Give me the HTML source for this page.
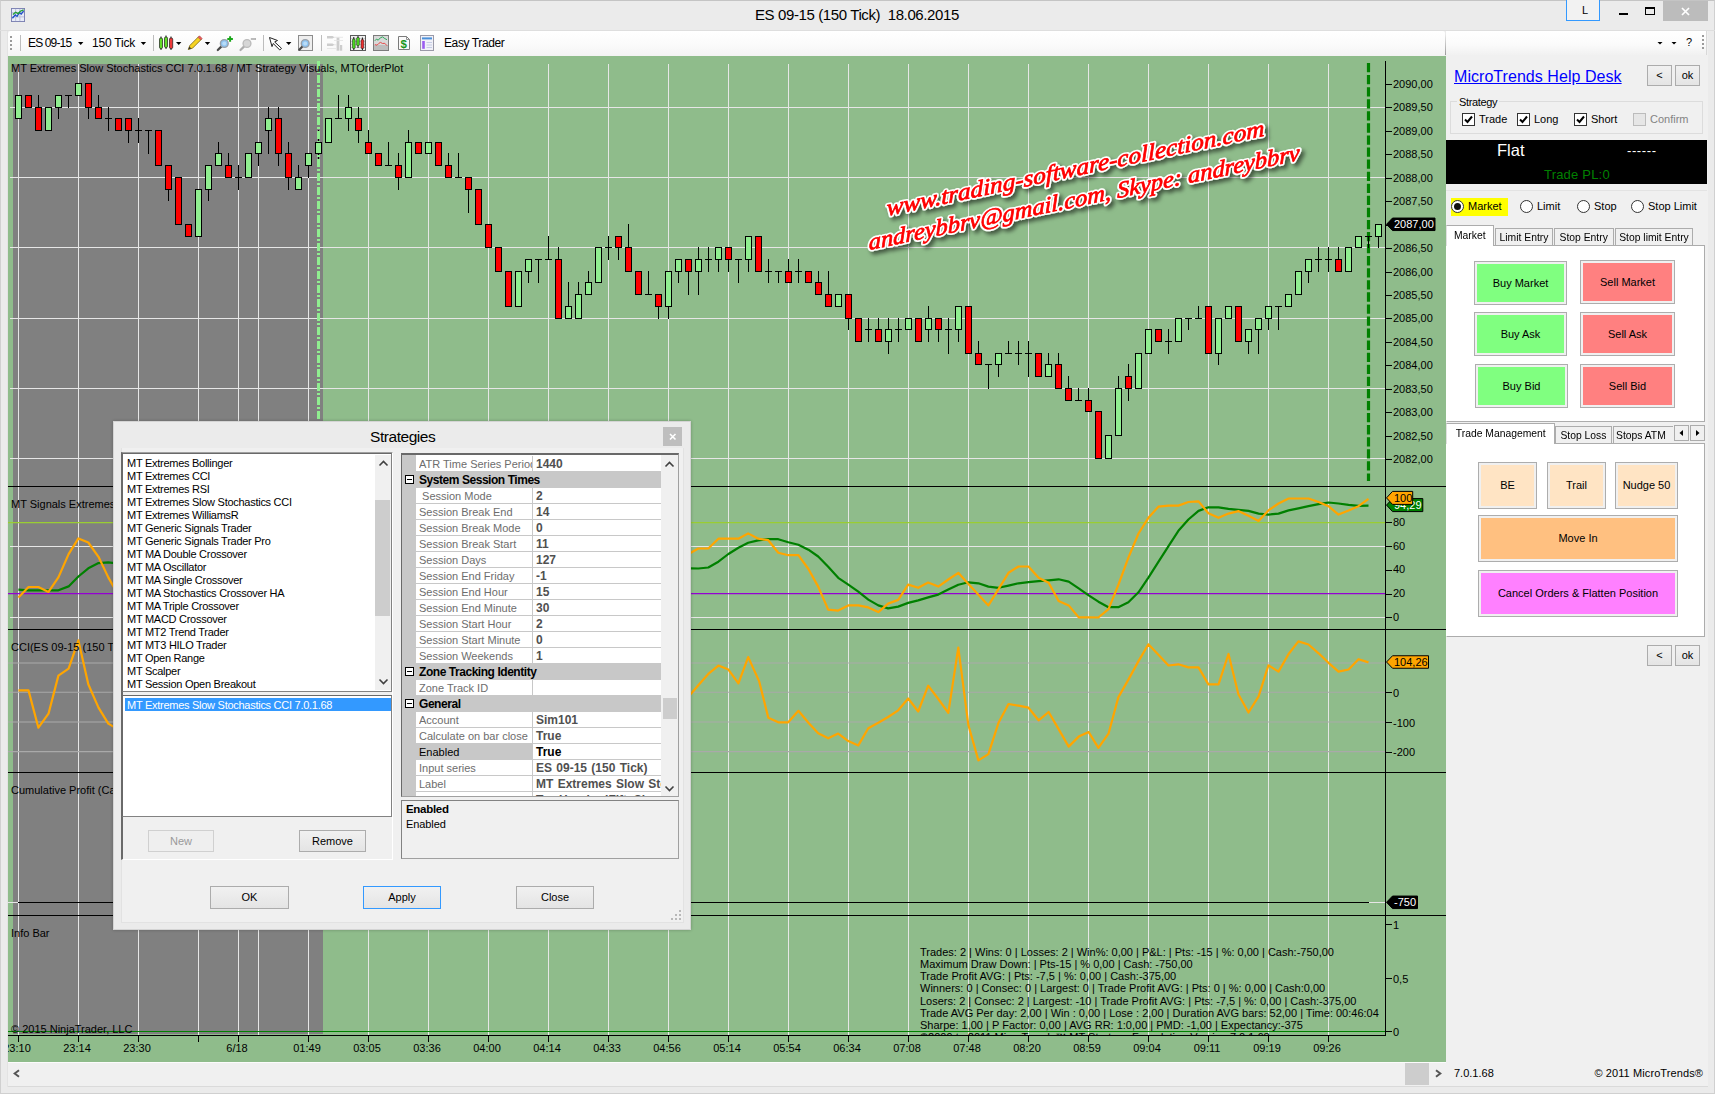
<!DOCTYPE html>
<html lang="en"><head><meta charset="utf-8"><title>ES 09-15 (150 Tick) 18.06.2015</title>
<style>
*{box-sizing:border-box;margin:0;padding:0}
html,body{width:1715px;height:1094px;overflow:hidden}
body{position:relative;background:#EBEBEB;font-family:"Liberation Sans",sans-serif;font-size:11px;color:#000}
.abs{position:absolute}
.t{position:absolute;white-space:nowrap;line-height:1}
.btn{position:absolute;background:linear-gradient(#F1F1F1,#E4E4E4);border:1px solid #ACACAC;text-align:center;white-space:nowrap}
.cbtn{position:absolute;background:#F0F0F0;border:1px solid #ADADAD;padding:2px}
.cbtn>div{width:100%;height:100%;display:flex;align-items:center;justify-content:center;white-space:nowrap;font-size:12px;padding-bottom:1px}
.nx{display:inline-block;font-size:11px}
.nc{display:inline-block;font-size:11px}
.nt{display:inline-block;font-size:11px;transform:scaleX(.94);transform-origin:50% 50%}
.ntl{display:inline-block;font-size:11px;transform:scaleX(.94);transform-origin:0 50%}
.chk{position:absolute;width:13px;height:13px;border:1px solid #333;background:#fff}
.chk svg{position:absolute;left:0;top:0}
.radio{position:absolute;width:13px;height:13px;border:1px solid #333;border-radius:50%;background:#fff}
.tab{position:absolute;border:1px solid #ACACAC;border-bottom:none;background:#F0F0F0;font-size:12px;white-space:nowrap;text-align:center}
.tab.sel{background:#fff;z-index:2}
.page{position:absolute;background:#fff;border:1px solid #ACACAC}
.row{position:absolute;left:0;height:16px;width:245px;border-bottom:1px solid #C8C8C8;color:#6D6D6D;white-space:nowrap;overflow:hidden}
.row .n{position:absolute;left:3px;top:2px;width:113px;overflow:hidden}
.row .v{position:absolute;left:120px;top:1px;font-weight:bold;color:#505050;font-size:12px;word-spacing:1px}
.row .s{position:absolute;left:116px;top:0;width:1px;height:16px;background:#C8C8C8}
.cat{position:absolute;left:-13px;height:16px;width:258px;background:#C8C8C8;font-weight:bold;color:#000;white-space:nowrap}
.cat span{position:absolute;left:16px;top:1px;font-size:12px;letter-spacing:-0.45px}
.cat i{position:absolute;left:2px;top:3px;width:9px;height:9px;border:1px solid #000;background:#fff}
.cat i:after{content:"";position:absolute;left:1px;top:3px;width:5px;height:1px;background:#000}
.li{position:absolute;left:6px;white-space:nowrap;letter-spacing:-0.27px}
</style></head><body>

<div class="abs" style="left:0;top:0;width:1715px;height:1094px;border:1px solid #D0D0D0;border-top-color:#C4C4C4"></div>
<svg class="abs" style="left:11px;top:8px" width="14" height="14" viewBox="0 0 15 15"><rect x=".5" y=".5" width="14" height="14" fill="#E8ECF8" stroke="#7A7FB0"/><path d="M1 5H14M1 9.5H14M5 1V14M9.5 1V14" stroke="#B8BCD8" stroke-width="1"/><path d="M1.5 11L4.5 7.5L6.5 9L9 5L11 6.5L13.5 3" fill="none" stroke="#2050C8" stroke-width="1.4"/><path d="M2 7L5 4.5L7.5 6L10 3.5L13.5 2" fill="none" stroke="#20A030" stroke-width="1.4"/></svg>
<div class="t" id="title" style="left:755px;top:7px;font-size:15px;letter-spacing:-0.39px;color:#000">ES 09-15 (150 Tick)&nbsp; 18.06.2015</div>
<div class="abs" style="left:1566px;top:0;width:34px;height:21px;border:1px solid #3399FF;border-top:none;background:#F2F2F2"></div>
<div class="t" style="left:1582px;top:5px;font-size:11px">L</div>
<div class="abs" style="left:1619px;top:13px;width:9px;height:2px;background:#000"></div>
<div class="abs" style="left:1645px;top:7px;width:10px;height:8px;border:1px solid #000;border-top-width:2px"></div>
<div class="abs" style="left:1663px;top:1px;width:45px;height:20px;background:#BCBCBC"></div>
<svg class="abs" style="left:1681px;top:7px" width="10" height="10"><path d="M1 1L8 8M8 1L1 8" stroke="#fff" stroke-width="1.7"/></svg>


<div class="abs" style="left:8px;top:31px;width:1437px;height:25px;background:linear-gradient(#FFFFFF,#FAFAFA 60%,#F3F3F3);border-top-left-radius:3px;border-top-right-radius:2px;border-bottom-right-radius:2px"></div>
<div class="abs" style="left:1445px;top:34px;width:1px;height:21px;background:linear-gradient(rgba(160,160,160,0),#9A9A9A)"></div>
<div class="abs" style="left:0;top:30px;width:1715px;height:1px;background:#DEDEDE"></div>
<svg class="abs" style="left:8px;top:31px" width="520" height="25" viewBox="8 31 520 25">
<g fill="#9A9A9A"><rect x="10" y="36" width="2" height="2"/><rect x="10" y="40" width="2" height="2"/><rect x="10" y="44" width="2" height="2"/><rect x="10" y="48" width="2" height="2"/></g>
<g stroke="#BDBDBD" stroke-width="1"><path d="M20.5 35V51M153.5 35V51M263.5 35V51M321.5 35V51"/></g>
<g fill="#000"><path d="M78 42h5.400l-2.700 3z"/><path d="M140.700 42h5.400l-2.700 3z"/><path d="M176 42h5.400l-2.700 3z"/><path d="M204.800 42h5.400l-2.700 3z"/><path d="M286 42h5.400l-2.700 3z"/></g>
<!-- candles icon -->
<g stroke="#1a1a1a" stroke-width="1"><path d="M161 36.500V50M166 35.500V49M171 36.500V50"/><rect x="159.500" y="38" width="3" height="10.500" rx="1.200" fill="#62DC2A" stroke-width=".7"/><rect x="164.500" y="37" width="3" height="10.500" rx="1.200" fill="#62DC2A" stroke-width=".7"/><rect x="169.500" y="38" width="3.200" height="10.500" rx="1.200" fill="#EE3A3A" stroke-width=".7"/></g>
<!-- pencil -->
<g><path d="M188.300 49.500l1.500-4l8.800-8.800l2.700 2.700l-8.800 8.800z" fill="#F6D422" stroke="#7A6410" stroke-width=".8"/><path d="M188.300 49.500l1.100-3l1.900 1.900z" fill="#333"/><path d="M198 37.300l1.500-1.500l2.700 2.700l-1.500 1.500z" fill="#E85C5C" stroke="#A04040" stroke-width=".5"/></g>
<!-- zoom in -->
<g><path d="M217.800 50l3.700-3.600" stroke="#4A4A4A" stroke-width="2.200" stroke-linecap="round"/><circle cx="224.300" cy="43.500" r="3.900" fill="#8EC4F2" stroke="#9AA0A8" stroke-width="1.400"/><circle cx="224.300" cy="43.500" r="2" fill="#B8DCF8"/><path d="M227.300 39h5.600M230.100 36.200v5.600" stroke="#18A818" stroke-width="2"/></g>
<!-- zoom out (grey) -->
<g><path d="M240.500 50l3.700-3.600" stroke="#ACACAC" stroke-width="2.200" stroke-linecap="round"/><circle cx="247" cy="43.500" r="3.900" fill="#D6D6D6" stroke="#BCBCBC" stroke-width="1.400"/><path d="M250.800 39h5.200" stroke="#B4B4B4" stroke-width="1.800"/></g>
<!-- cursor -->
<path d="M269.500 37.500L277.500 40.500L274.700 42L281.500 48.300L279.800 50L273.200 43.500L272 46.600Z" fill="#fff" stroke="#222" stroke-width="1"/>
<!-- zoom box -->
<g><rect x="298.500" y="35.500" width="14" height="15" fill="#EEEEEE" stroke="#8C8C8C"/><circle cx="305.200" cy="43.500" r="3.900" fill="#8EC4F2" stroke="#9AA0A8" stroke-width="1.400"/><circle cx="305.200" cy="43.500" r="2" fill="#B8DCF8"/><path d="M298.800 50.200l3.600-3.700" stroke="#4A4A4A" stroke-width="2.200"/></g>
<!-- grey icon -->
<g fill="#CDCDCD"><path d="M327 36h5.500l2 1.300l-2 1.300h-5.500z"/><path d="M327 43.500h5.500l2 1.300l-2 1.300h-5.500z"/><rect x="336.600" y="37.500" width="2.800" height="13.200"/><rect x="340" y="45" width="2.200" height="5.700"/><path d="M334 37.300h9M334 40.500h9M334 44.800h3M327 48.500h9" stroke="#E2E2E2" stroke-width=".8" fill="none"/></g>
<!-- candle chart icon -->
<g><rect x="350.500" y="35.500" width="15" height="15" fill="#F0F0F0" stroke="#5A5A5A"/><path d="M351 38.500h14M351 41.500h14M351 44.500h14M351 47.500h14" stroke="#C4C4C4" stroke-width=".8"/><path d="M353.800 37V50M358 36V48M362.400 37.500V50" stroke="#111"/><rect x="352.400" y="39" width="2.800" height="9.500" rx="1" fill="#4CD820" stroke="#111" stroke-width=".5"/><rect x="356.600" y="37.500" width="2.800" height="8.200" rx="1" fill="#4CD820" stroke="#111" stroke-width=".5"/><rect x="361" y="39.600" width="2.800" height="9" rx="1" fill="#EE3030" stroke="#111" stroke-width=".5"/></g>
<!-- line chart icon -->
<g><rect x="373.500" y="35.500" width="15" height="15" fill="#D9D9D9" stroke="#7C7C7C"/><rect x="374" y="45" width="14" height="5" fill="#BDBDBD"/><path d="M374.800 40.800l1.700-1.700l1.700 1.100l2.200-2.400l2.200-.900l2.200 1.700l2.200 1.100" fill="none" stroke="#2CA85A" stroke-width="1"/><path d="M374.800 44.600l2.200.600l1.700-1.700l1.700-1.100l2.200 1.100l2.200-.200l2.200 2.400" fill="none" stroke="#E84848" stroke-width="1"/></g>
<!-- dollar icon -->
<g><path d="M398.500 36.500h8l3 3v10h-11z" fill="#FAFAFA" stroke="#7A7A7A"/><path d="M406.500 36.500v3h3" fill="none" stroke="#7A7A7A" stroke-width=".8"/><text x="400.400" y="47.800" font-size="11.500" font-weight="bold" fill="#18961E" font-family="'Liberation Sans',sans-serif">$</text></g>
<!-- table icon -->
<g><rect x="420.500" y="35.500" width="13" height="15" fill="#F1F1F8" stroke="#9A9AA8"/><rect x="422" y="37.400" width="10" height="2" fill="#4A90DA"/><rect x="422.200" y="41" width="2.600" height="7.800" fill="#9A5CF0"/><path d="M426.500 42.500h5.500M426.500 45h5.500M426.500 47.500h5.500" stroke="#C4CCE4" stroke-width="1"/></g>
</svg>
<div class="t" style="left:28px;top:37px;font-size:12px;letter-spacing:-0.85px">ES 09-15</div>
<div class="t" style="left:92px;top:37px;font-size:12px;letter-spacing:-0.2px">150 Tick</div>
<div class="t" style="left:444px;top:37px;font-size:12px;letter-spacing:-0.4px">Easy Trader</div>

<svg id="chart" width="1438" height="1006" viewBox="8 56 1438 1006" style="position:absolute;left:8px;top:56px;font-family:'Liberation Sans',sans-serif;font-size:11px">
<rect x="8" y="56" width="1438" height="1006" fill="#8FBC8B"/>
<rect x="13" y="64" width="310" height="970" fill="#808080"/>
<g stroke="#E6E6E6" stroke-width="1" fill="none" shape-rendering="crispEdges">
<path d="M18.5 64V1035"/>
<path d="M78.5 64V1035"/>
<path d="M138.5 64V1035"/>
<path d="M198.5 64V1035"/>
<path d="M238.5 64V1035"/>
<path d="M258.5 64V1035"/>
<path d="M308.5 64V1035"/>
<path d="M368.5 64V1035"/>
<path d="M428.5 64V1035"/>
<path d="M488.5 64V1035"/>
<path d="M548.5 64V1035"/>
<path d="M608.5 64V1035"/>
<path d="M668.5 64V1035"/>
<path d="M728.5 64V1035"/>
<path d="M788.5 64V1035"/>
<path d="M848.5 64V1035"/>
<path d="M908.5 64V1035"/>
<path d="M968.5 64V1035"/>
<path d="M1028.5 64V1035"/>
<path d="M1088.5 64V1035"/>
<path d="M1148.5 64V1035"/>
<path d="M1208.5 64V1035"/>
<path d="M1268.5 64V1035"/>
<path d="M1328.5 64V1035"/>
<path d="M10 107.5H1385"/>
<path d="M10 177.5H1385"/>
<path d="M10 247.5H1385"/>
<path d="M10 318.5H1385"/>
<path d="M10 388.5H1385"/>
<path d="M10 458.5H1385"/>
<path d="M10 546.5H1385"/>
<path d="M10 617.5H1385"/>
<path d="M8 902.5H1386"/>
</g>
<path d="M8 522.6H1386" stroke="#9ACD32" stroke-width="1.2"/>
<path d="M8 593.6H1386" stroke="#9400D3" stroke-width="1.2"/>
<path d="M8 663H1386" stroke="#A9A9A9" stroke-width="1.1"/>
<path d="M8 692.3H1386" stroke="#A9A9A9" stroke-width="1.1"/>
<path d="M8 722H1386" stroke="#A9A9A9" stroke-width="1.1"/>
<path d="M8 751.6H1386" stroke="#A9A9A9" stroke-width="1.1"/>
<path d="M1368.5 63V481" stroke="#008000" stroke-width="3.2" stroke-dasharray="9.3 2.77" fill="none"/>
<g shape-rendering="crispEdges" stroke="#000" stroke-width="1">
<path d="M18.5 95V119"/>
<rect x="15.5" y="95.5" width="6" height="23.0" fill="#90EE90"/>
<path d="M28.5 95V108"/>
<rect x="25.5" y="95.5" width="6" height="12.0" fill="#FF0000"/>
<path d="M38.5 95V131"/>
<rect x="35.5" y="107.5" width="6" height="23.0" fill="#FF0000"/>
<path d="M48.5 107V131"/>
<rect x="45.5" y="107.5" width="6" height="23.0" fill="#90EE90"/>
<path d="M58.5 95V119"/>
<rect x="55.5" y="95.5" width="6" height="12.0" fill="#90EE90"/>
<path d="M68.5 95V108"/>
<path d="M65.0 95.5H72.0"/>
<path d="M78.5 83V96"/>
<rect x="75.5" y="83.5" width="6" height="12.0" fill="#90EE90"/>
<path d="M88.5 83V119"/>
<rect x="85.5" y="83.5" width="6" height="24.0" fill="#FF0000"/>
<path d="M98.5 95V119"/>
<rect x="95.5" y="107.5" width="6" height="11.0" fill="#FF0000"/>
<path d="M108.5 107V131"/>
<path d="M105.0 118.5H112.0"/>
<path d="M118.5 118V131"/>
<rect x="115.5" y="118.5" width="6" height="12.0" fill="#FF0000"/>
<path d="M128.5 118V143"/>
<rect x="125.5" y="118.5" width="6" height="12.0" fill="#FF0000"/>
<path d="M138.5 118V143"/>
<path d="M135.0 130.5H142.0"/>
<path d="M148.5 130V154"/>
<path d="M145.0 130.5H152.0"/>
<path d="M158.5 130V166"/>
<rect x="155.5" y="130.5" width="6" height="35.0" fill="#FF0000"/>
<path d="M168.5 165V201"/>
<rect x="165.5" y="165.5" width="6" height="24.0" fill="#FF0000"/>
<path d="M178.5 177V225"/>
<rect x="175.5" y="177.5" width="6" height="47.0" fill="#FF0000"/>
<path d="M188.5 224V237"/>
<rect x="185.5" y="224.5" width="6" height="12.0" fill="#FF0000"/>
<path d="M198.5 189V237"/>
<rect x="195.5" y="189.5" width="6" height="47.0" fill="#90EE90"/>
<path d="M208.5 165V201"/>
<rect x="205.5" y="165.5" width="6" height="24.0" fill="#90EE90"/>
<path d="M218.5 142V166"/>
<rect x="215.5" y="153.5" width="6" height="12.0" fill="#90EE90"/>
<path d="M228.5 153V178"/>
<rect x="225.5" y="165.5" width="6" height="12.0" fill="#FF0000"/>
<path d="M238.5 165V190"/>
<path d="M235.0 177.5H242.0"/>
<path d="M248.5 153V178"/>
<rect x="245.5" y="153.5" width="6" height="24.0" fill="#90EE90"/>
<path d="M258.5 142V166"/>
<rect x="255.5" y="142.5" width="6" height="11.0" fill="#90EE90"/>
<path d="M268.5 107V154"/>
<rect x="265.5" y="118.5" width="6" height="12.0" fill="#90EE90"/>
<path d="M278.5 107V166"/>
<rect x="275.5" y="118.5" width="6" height="35.0" fill="#FF0000"/>
<path d="M288.5 142V190"/>
<rect x="285.5" y="153.5" width="6" height="24.0" fill="#FF0000"/>
<path d="M298.5 165V190"/>
<rect x="295.5" y="177.5" width="6" height="12.0" fill="#90EE90"/>
<path d="M308.5 153V178"/>
<rect x="305.5" y="153.5" width="6" height="12.0" fill="#90EE90"/>
<path d="M318.5 130V166"/>
<rect x="315.5" y="142.5" width="6" height="11.0" fill="#90EE90"/>
<path d="M328.5 118V143"/>
<rect x="325.5" y="118.5" width="6" height="24.0" fill="#90EE90"/>
<path d="M338.5 95V119"/>
<path d="M335.0 118.5H342.0"/>
<path d="M348.5 95V131"/>
<rect x="345.5" y="107.5" width="6" height="11.0" fill="#90EE90"/>
<path d="M358.5 107V143"/>
<rect x="355.5" y="118.5" width="6" height="12.0" fill="#FF0000"/>
<path d="M368.5 130V154"/>
<rect x="365.5" y="142.5" width="6" height="11.0" fill="#FF0000"/>
<path d="M378.5 153V166"/>
<rect x="375.5" y="153.5" width="6" height="12.0" fill="#FF0000"/>
<path d="M388.5 142V166"/>
<path d="M385.0 165.5H392.0"/>
<path d="M398.5 153V190"/>
<rect x="395.5" y="165.5" width="6" height="12.0" fill="#FF0000"/>
<path d="M408.5 130V178"/>
<rect x="405.5" y="142.5" width="6" height="35.0" fill="#90EE90"/>
<path d="M418.5 142V154"/>
<rect x="415.5" y="142.5" width="6" height="11.0" fill="#FF0000"/>
<path d="M428.5 142V154"/>
<rect x="425.5" y="142.5" width="6" height="11.0" fill="#90EE90"/>
<path d="M438.5 142V166"/>
<rect x="435.5" y="142.5" width="6" height="23.0" fill="#FF0000"/>
<path d="M448.5 153V178"/>
<rect x="445.5" y="165.5" width="6" height="12.0" fill="#FF0000"/>
<path d="M458.5 153V178"/>
<path d="M455.0 177.5H462.0"/>
<path d="M468.5 177V213"/>
<rect x="465.5" y="177.5" width="6" height="12.0" fill="#FF0000"/>
<path d="M478.5 189V225"/>
<rect x="475.5" y="189.5" width="6" height="35.0" fill="#FF0000"/>
<path d="M488.5 224V248"/>
<rect x="485.5" y="224.5" width="6" height="23.0" fill="#FF0000"/>
<path d="M498.5 247V272"/>
<rect x="495.5" y="247.5" width="6" height="24.0" fill="#FF0000"/>
<path d="M508.5 271V307"/>
<rect x="505.5" y="271.5" width="6" height="35.0" fill="#FF0000"/>
<path d="M518.5 271V307"/>
<rect x="515.5" y="271.5" width="6" height="35.0" fill="#90EE90"/>
<path d="M528.5 259V283"/>
<rect x="525.5" y="259.5" width="6" height="12.0" fill="#90EE90"/>
<path d="M538.5 259V283"/>
<path d="M535.0 259.5H542.0"/>
<path d="M548.5 236V260"/>
<path d="M545.0 259.5H552.0"/>
<path d="M558.5 247V319"/>
<rect x="555.5" y="259.5" width="6" height="59.0" fill="#FF0000"/>
<path d="M568.5 282V319"/>
<rect x="565.5" y="306.5" width="6" height="12.0" fill="#90EE90"/>
<path d="M578.5 282V319"/>
<rect x="575.5" y="294.5" width="6" height="24.0" fill="#90EE90"/>
<path d="M588.5 271V295"/>
<rect x="585.5" y="282.5" width="6" height="12.0" fill="#90EE90"/>
<path d="M598.5 247V283"/>
<rect x="595.5" y="247.5" width="6" height="35.0" fill="#90EE90"/>
<path d="M608.5 236V260"/>
<path d="M605.0 247.5H612.0"/>
<path d="M618.5 236V260"/>
<rect x="615.5" y="236.5" width="6" height="11.0" fill="#FF0000"/>
<path d="M628.5 224V272"/>
<rect x="625.5" y="247.5" width="6" height="24.0" fill="#FF0000"/>
<path d="M638.5 271V295"/>
<rect x="635.5" y="271.5" width="6" height="23.0" fill="#FF0000"/>
<path d="M648.5 271V295"/>
<path d="M645.0 294.5H652.0"/>
<path d="M658.5 294V319"/>
<rect x="655.5" y="294.5" width="6" height="12.0" fill="#FF0000"/>
<path d="M668.5 271V319"/>
<rect x="665.5" y="271.5" width="6" height="35.0" fill="#90EE90"/>
<path d="M678.5 259V283"/>
<rect x="675.5" y="259.5" width="6" height="12.0" fill="#90EE90"/>
<path d="M688.5 259V295"/>
<rect x="685.5" y="259.5" width="6" height="12.0" fill="#FF0000"/>
<path d="M698.5 247V295"/>
<rect x="695.5" y="259.5" width="6" height="12.0" fill="#90EE90"/>
<path d="M708.5 247V272"/>
<path d="M705.0 259.5H712.0"/>
<path d="M718.5 247V272"/>
<rect x="715.5" y="247.5" width="6" height="12.0" fill="#90EE90"/>
<path d="M728.5 247V272"/>
<rect x="725.5" y="247.5" width="6" height="12.0" fill="#FF0000"/>
<path d="M738.5 259V283"/>
<path d="M735.0 259.5H742.0"/>
<path d="M748.5 236V272"/>
<rect x="745.5" y="236.5" width="6" height="23.0" fill="#90EE90"/>
<path d="M758.5 236V272"/>
<rect x="755.5" y="236.5" width="6" height="35.0" fill="#FF0000"/>
<path d="M768.5 259V283"/>
<path d="M765.0 271.5H772.0"/>
<path d="M778.5 271V283"/>
<path d="M775.0 271.5H782.0"/>
<path d="M788.5 259V283"/>
<rect x="785.5" y="271.5" width="6" height="11.0" fill="#FF0000"/>
<path d="M798.5 259V283"/>
<path d="M795.0 271.5H802.0"/>
<path d="M808.5 271V283"/>
<rect x="805.5" y="271.5" width="6" height="11.0" fill="#FF0000"/>
<path d="M818.5 271V295"/>
<rect x="815.5" y="282.5" width="6" height="12.0" fill="#FF0000"/>
<path d="M828.5 271V307"/>
<rect x="825.5" y="294.5" width="6" height="12.0" fill="#FF0000"/>
<path d="M838.5 294V307"/>
<rect x="835.5" y="294.5" width="6" height="12.0" fill="#90EE90"/>
<path d="M848.5 294V330"/>
<rect x="845.5" y="294.5" width="6" height="24.0" fill="#FF0000"/>
<path d="M858.5 318V342"/>
<rect x="855.5" y="318.5" width="6" height="23.0" fill="#FF0000"/>
<path d="M868.5 318V342"/>
<path d="M865.0 329.5H872.0"/>
<path d="M878.5 318V342"/>
<rect x="875.5" y="329.5" width="6" height="12.0" fill="#FF0000"/>
<path d="M888.5 318V354"/>
<rect x="885.5" y="329.5" width="6" height="12.0" fill="#90EE90"/>
<path d="M898.5 318V342"/>
<path d="M895.0 329.5H902.0"/>
<path d="M908.5 318V330"/>
<rect x="905.5" y="318.5" width="6" height="11.0" fill="#90EE90"/>
<path d="M918.5 318V342"/>
<rect x="915.5" y="318.5" width="6" height="23.0" fill="#FF0000"/>
<path d="M928.5 306V342"/>
<rect x="925.5" y="318.5" width="6" height="11.0" fill="#90EE90"/>
<path d="M938.5 318V342"/>
<rect x="935.5" y="318.5" width="6" height="11.0" fill="#FF0000"/>
<path d="M948.5 318V354"/>
<path d="M945.0 329.5H952.0"/>
<path d="M958.5 306V342"/>
<rect x="955.5" y="306.5" width="6" height="23.0" fill="#90EE90"/>
<path d="M968.5 306V354"/>
<rect x="965.5" y="306.5" width="6" height="47.0" fill="#FF0000"/>
<path d="M978.5 341V365"/>
<rect x="975.5" y="353.5" width="6" height="11.0" fill="#FF0000"/>
<path d="M988.5 364V389"/>
<path d="M985.0 364.5H992.0"/>
<path d="M998.5 353V377"/>
<rect x="995.5" y="353.5" width="6" height="11.0" fill="#90EE90"/>
<path d="M1008.5 341V354"/>
<path d="M1005.0 353.5H1012.0"/>
<path d="M1018.5 341V365"/>
<path d="M1015.0 353.5H1022.0"/>
<path d="M1028.5 341V377"/>
<path d="M1025.0 353.5H1032.0"/>
<path d="M1038.5 353V377"/>
<rect x="1035.5" y="353.5" width="6" height="23.0" fill="#FF0000"/>
<path d="M1048.5 353V377"/>
<rect x="1045.5" y="364.5" width="6" height="12.0" fill="#90EE90"/>
<path d="M1058.5 353V389"/>
<rect x="1055.5" y="364.5" width="6" height="24.0" fill="#FF0000"/>
<path d="M1068.5 376V401"/>
<rect x="1065.5" y="388.5" width="6" height="12.0" fill="#FF0000"/>
<path d="M1078.5 388V401"/>
<path d="M1075.0 400.5H1082.0"/>
<path d="M1088.5 388V412"/>
<rect x="1085.5" y="400.5" width="6" height="11.0" fill="#FF0000"/>
<path d="M1098.5 411V459"/>
<rect x="1095.5" y="411.5" width="6" height="47.0" fill="#FF0000"/>
<path d="M1108.5 435V459"/>
<rect x="1105.5" y="435.5" width="6" height="23.0" fill="#90EE90"/>
<path d="M1118.5 376V436"/>
<rect x="1115.5" y="388.5" width="6" height="47.0" fill="#90EE90"/>
<path d="M1128.5 364V401"/>
<rect x="1125.5" y="376.5" width="6" height="12.0" fill="#FF0000"/>
<path d="M1138.5 353V389"/>
<rect x="1135.5" y="353.5" width="6" height="35.0" fill="#90EE90"/>
<path d="M1148.5 329V354"/>
<rect x="1145.5" y="329.5" width="6" height="24.0" fill="#90EE90"/>
<path d="M1158.5 329V342"/>
<rect x="1155.5" y="329.5" width="6" height="12.0" fill="#FF0000"/>
<path d="M1168.5 329V354"/>
<path d="M1165.0 341.5H1172.0"/>
<path d="M1178.5 318V342"/>
<rect x="1175.5" y="318.5" width="6" height="23.0" fill="#90EE90"/>
<path d="M1188.5 318V330"/>
<path d="M1185.0 318.5H1192.0"/>
<path d="M1198.5 306V319"/>
<path d="M1195.0 318.5H1202.0"/>
<path d="M1208.5 306V354"/>
<rect x="1205.5" y="306.5" width="6" height="47.0" fill="#FF0000"/>
<path d="M1218.5 318V365"/>
<rect x="1215.5" y="318.5" width="6" height="35.0" fill="#90EE90"/>
<path d="M1228.5 306V319"/>
<rect x="1225.5" y="306.5" width="6" height="12.0" fill="#90EE90"/>
<path d="M1238.5 306V342"/>
<rect x="1235.5" y="306.5" width="6" height="35.0" fill="#FF0000"/>
<path d="M1248.5 329V354"/>
<rect x="1245.5" y="329.5" width="6" height="12.0" fill="#90EE90"/>
<path d="M1258.5 318V354"/>
<rect x="1255.5" y="318.5" width="6" height="11.0" fill="#90EE90"/>
<path d="M1268.5 306V330"/>
<rect x="1265.5" y="306.5" width="6" height="12.0" fill="#90EE90"/>
<path d="M1278.5 306V330"/>
<path d="M1275.0 306.5H1282.0"/>
<path d="M1288.5 294V307"/>
<rect x="1285.5" y="294.5" width="6" height="12.0" fill="#90EE90"/>
<path d="M1298.5 271V295"/>
<rect x="1295.5" y="271.5" width="6" height="23.0" fill="#90EE90"/>
<path d="M1308.5 259V283"/>
<rect x="1305.5" y="259.5" width="6" height="12.0" fill="#90EE90"/>
<path d="M1318.5 247V272"/>
<path d="M1315.0 259.5H1322.0"/>
<path d="M1328.5 247V272"/>
<path d="M1325.0 259.5H1332.0"/>
<path d="M1338.5 247V272"/>
<rect x="1335.5" y="259.5" width="6" height="12.0" fill="#FF0000"/>
<path d="M1348.5 247V272"/>
<rect x="1345.5" y="247.5" width="6" height="24.0" fill="#90EE90"/>
<path d="M1358.5 236V248"/>
<rect x="1355.5" y="236.5" width="6" height="11.0" fill="#90EE90"/>
<path d="M1368.5 236V248"/>
<path d="M1365.0 236.5H1372.0"/>
<path d="M1378.5 224V248"/>
<rect x="1375.5" y="224.5" width="6" height="12.0" fill="#90EE90"/>
</g>
<path d="M318.5 61V486" stroke="#90EE90" stroke-width="3" stroke-dasharray="8 2 2 2" fill="none"/>
<rect x="315.5" y="142.5" width="6" height="11" fill="#90EE90" stroke="#000" stroke-width="1" shape-rendering="crispEdges"/>
<polyline points="18.4,589.7 28.5,590.3 38.4,590.3 48.5,590.3 58.4,590.3 68.6,586.4 78.4,576.5 88.3,568.3 98.5,563.1 108.3,562.3 118.5,563.7" fill="none" stroke="#008000" stroke-width="2.2" stroke-linejoin="round"/>
<polyline points="18.4,597.4 28.5,587.0 38.4,587.0 48.5,591.9 58.4,577.4 68.6,554.1 78.4,538.4 88.3,542.5 98.5,556.8 108.3,577.4 118.5,595.2" fill="none" stroke="#FFA500" stroke-width="2.2" stroke-linejoin="round"/>
<polyline points="680.8,568.3 690.8,568.3 698.3,568.5 708.3,567.5 718.4,561.7 728.4,554.0 738.4,547.7 748.2,542.7 758.2,540.4 768.3,539.2 778.3,539.2 788.3,542.2 798.4,544.7 808.4,549.7 818.2,556.5 828.2,566.8 838.2,577.8 848.3,584.6 858.3,591.6 868.3,599.6 878.3,605.4 888.1,608.4 898.2,606.6 908.2,602.9 918.2,600.4 928.2,597.4 938.3,594.6 948.3,589.6 958.3,584.8 968.4,582.3 978.4,583.3 988.4,586.6 998.5,587.8 1008.5,585.6 1018.5,583.3 1028.5,582.1 1038.6,581.1 1048.6,580.3 1058.6,579.3 1068.7,581.6 1078.7,588.3 1088.7,595.3 1098.4,601.7 1108.5,607.2 1118.3,607.2 1128.4,602.2 1138.5,592.3 1148.4,577.6 1158.4,561.9 1168.5,546.1 1178.4,530.8 1188.4,519.5 1198.5,510.9 1208.4,507.3 1218.5,507.3 1228.5,508.8 1238.4,509.8 1248.5,510.9 1258.6,513.6 1268.4,514.6 1278.5,513.6 1288.6,510.4 1298.4,508.3 1308.5,506.2 1318.6,504.1 1328.5,502.5 1338.5,503.5 1348.6,504.8 1358.5,505.8 1368.5,505.6" fill="none" stroke="#008000" stroke-width="2.2" stroke-linejoin="round"/>
<polyline points="680.8,557.7 690.8,552.7 698.3,548.5 708.3,548.5 718.4,538.7 728.4,538.7 738.4,538.7 748.2,533.4 758.2,538.7 768.3,540.2 778.3,552.7 788.3,555.2 798.4,555.2 808.4,569.0 818.2,586.6 828.2,609.6 838.2,610.6 848.3,605.4 858.3,605.4 868.3,607.4 878.3,612.1 888.1,603.6 898.2,599.9 908.2,584.6 918.2,587.8 928.2,582.6 938.3,586.6 948.3,579.5 958.3,572.8 968.4,584.1 978.4,594.8 988.4,605.4 998.5,589.1 1008.5,572.8 1018.5,566.5 1028.5,566.5 1038.6,577.8 1048.6,582.8 1058.6,600.9 1068.7,605.4 1078.7,617.4 1088.7,617.4 1098.4,617.5 1108.5,609.1 1118.3,585.0 1128.4,557.7 1138.5,533.5 1148.4,517.8 1158.4,506.7 1168.5,505.6 1178.4,505.6 1188.4,502.0 1198.5,501.4 1208.4,513.2 1218.5,517.8 1228.5,513.6 1238.4,511.1 1248.5,515.7 1258.6,520.9 1268.4,510.4 1278.5,503.5 1288.6,498.5 1298.4,498.5 1308.5,498.5 1318.6,502.0 1328.5,506.2 1338.5,514.6 1348.6,510.4 1358.5,506.2 1368.5,498.9" fill="none" stroke="#FFA500" stroke-width="2.2" stroke-linejoin="round"/>
<polyline points="18.4,690.4 28.5,690.4 38.4,727.7 48.5,713.7 58.4,675.6 68.6,668.7 78.4,640.4 88.3,684.3 98.5,707.6 108.3,723.6 118.5,729.6" fill="none" stroke="#FFA500" stroke-width="2.2" stroke-linejoin="round"/>
<polyline points="680.8,702.7 690.8,694.0 698.3,685.2 708.3,673.9 718.4,665.6 728.4,669.6 738.4,683.4 748.2,657.1 759.2,681.4 768.3,717.8 778.3,722.3 788.3,722.3 798.4,710.8 808.4,722.8 818.2,733.3 828.2,738.3 838.2,733.6 848.3,741.1 858.3,745.4 868.3,728.3 878.3,722.8 888.1,717.0 898.2,710.3 908.2,698.5 918.2,711.5 928.2,685.7 938.3,699.0 948.3,712.8 958.3,647.6 968.4,725.3 978.4,760.4 988.4,754.1 998.5,722.8 1008.5,704.0 1018.5,705.7 1028.5,707.7 1038.6,720.3 1048.6,712.0 1058.6,729.1 1068.7,746.6 1078.7,736.6 1088.7,732.1 1098.4,747.8 1108.5,733.7 1118.3,697.4 1128.4,679.6 1138.5,661.1 1148.4,644.3 1158.4,654.8 1168.5,665.5 1178.4,664.3 1188.4,667.4 1198.5,667.4 1208.4,684.4 1218.5,684.4 1228.5,654.0 1238.4,694.3 1248.5,712.5 1258.6,696.4 1268.4,665.3 1278.5,671.6 1288.6,654.0 1298.4,641.4 1308.5,644.5 1318.6,653.3 1328.5,662.8 1338.5,671.6 1348.6,669.5 1358.5,659.2 1368.5,662.4" fill="none" stroke="#FFA500" stroke-width="2.2" stroke-linejoin="round"/>
<path d="M18 902.5H1369" stroke="#000" stroke-width="1" shape-rendering="crispEdges"/>
<path d="M8 1031.5H1386" stroke="#008000" stroke-width="1" shape-rendering="crispEdges"/>
<g stroke="#000" stroke-width="1" fill="none" shape-rendering="crispEdges">
<path d="M8 486.5H1446"/>
<path d="M8 629.5H1446"/>
<path d="M8 772.5H1446"/>
<path d="M8 915.5H1446"/>
<path d="M1385.5 61V1036"/>
<path d="M8 1035.5H1386"/>
</g>
<g stroke="#000" stroke-width="1" shape-rendering="crispEdges">
<path d="M1386 84.5H1392"/>
<path d="M1386 107.5H1392"/>
<path d="M1386 131.5H1392"/>
<path d="M1386 154.5H1392"/>
<path d="M1386 178.5H1392"/>
<path d="M1386 201.5H1392"/>
<path d="M1386 225.5H1392"/>
<path d="M1386 248.5H1392"/>
<path d="M1386 272.5H1392"/>
<path d="M1386 295.5H1392"/>
<path d="M1386 318.5H1392"/>
<path d="M1386 342.5H1392"/>
<path d="M1386 365.5H1392"/>
<path d="M1386 389.5H1392"/>
<path d="M1386 412.5H1392"/>
<path d="M1386 436.5H1392"/>
<path d="M1386 459.5H1392"/>
<path d="M1386 522.5H1392"/>
<path d="M1386 546.5H1392"/>
<path d="M1386 570.5H1392"/>
<path d="M1386 594.5H1392"/>
<path d="M1386 617.5H1392"/>
<path d="M1386 692.5H1392"/>
<path d="M1386 722.5H1392"/>
<path d="M1386 752.5H1392"/>
<path d="M1386 924.5H1392"/>
<path d="M1386 978.5H1392"/>
<path d="M1386 1031.5H1392"/>
<path d="M18.5 1036V1042"/>
<path d="M78.5 1036V1042"/>
<path d="M138.5 1036V1042"/>
<path d="M198.5 1036V1042"/>
<path d="M238.5 1036V1042"/>
<path d="M308.5 1036V1042"/>
<path d="M368.5 1036V1042"/>
<path d="M428.5 1036V1042"/>
<path d="M488.5 1036V1042"/>
<path d="M548.5 1036V1042"/>
<path d="M608.5 1036V1042"/>
<path d="M668.5 1036V1042"/>
<path d="M728.5 1036V1042"/>
<path d="M788.5 1036V1042"/>
<path d="M848.5 1036V1042"/>
<path d="M908.5 1036V1042"/>
<path d="M968.5 1036V1042"/>
<path d="M1028.5 1036V1042"/>
<path d="M1088.5 1036V1042"/>
<path d="M1148.5 1036V1042"/>
<path d="M1208.5 1036V1042"/>
<path d="M1268.5 1036V1042"/>
<path d="M1328.5 1036V1042"/>
</g>
<g fill="#000">
<text x="1393" y="88.0">2090,00</text>
<text x="1393" y="111.4">2089,50</text>
<text x="1393" y="134.9">2089,00</text>
<text x="1393" y="158.3">2088,50</text>
<text x="1393" y="181.8">2088,00</text>
<text x="1393" y="205.2">2087,50</text>
<text x="1393" y="228.6">2087,00</text>
<text x="1393" y="252.1">2086,50</text>
<text x="1393" y="275.5">2086,00</text>
<text x="1393" y="299.0">2085,50</text>
<text x="1393" y="322.4">2085,00</text>
<text x="1393" y="345.8">2084,50</text>
<text x="1393" y="369.3">2084,00</text>
<text x="1393" y="392.7">2083,50</text>
<text x="1393" y="416.2">2083,00</text>
<text x="1393" y="439.6">2082,50</text>
<text x="1393" y="463.0">2082,00</text>
<text x="1393" y="526.1">80</text>
<text x="1393" y="549.8">60</text>
<text x="1393" y="573.4">40</text>
<text x="1393" y="597.1">20</text>
<text x="1393" y="620.8">0</text>
<text x="1393" y="696.5">0</text>
<text x="1393" y="726.5">-100</text>
<text x="1393" y="756">-200</text>
<text x="1393" y="928.5">1</text>
<text x="1393" y="982.5">0,5</text>
<text x="1393" y="1035.5">0</text>
<text x="17.0" y="1052" text-anchor="middle">23:10</text>
<text x="77.0" y="1052" text-anchor="middle">23:14</text>
<text x="137.0" y="1052" text-anchor="middle">23:30</text>
<text x="237.0" y="1052" text-anchor="middle">6/18</text>
<text x="307.0" y="1052" text-anchor="middle">01:49</text>
<text x="367.0" y="1052" text-anchor="middle">03:05</text>
<text x="427.0" y="1052" text-anchor="middle">03:36</text>
<text x="487.0" y="1052" text-anchor="middle">04:00</text>
<text x="547.0" y="1052" text-anchor="middle">04:14</text>
<text x="607.0" y="1052" text-anchor="middle">04:33</text>
<text x="667.0" y="1052" text-anchor="middle">04:56</text>
<text x="727.0" y="1052" text-anchor="middle">05:14</text>
<text x="787.0" y="1052" text-anchor="middle">05:54</text>
<text x="847.0" y="1052" text-anchor="middle">06:34</text>
<text x="907.0" y="1052" text-anchor="middle">07:08</text>
<text x="967.0" y="1052" text-anchor="middle">07:48</text>
<text x="1027.0" y="1052" text-anchor="middle">08:20</text>
<text x="1087.0" y="1052" text-anchor="middle">08:59</text>
<text x="1147.0" y="1052" text-anchor="middle">09:04</text>
<text x="1207.0" y="1052" text-anchor="middle">09:11</text>
<text x="1267.0" y="1052" text-anchor="middle">09:19</text>
<text x="1327.0" y="1052" text-anchor="middle">09:26</text>
<text x="11" y="72">MT Extremes Slow Stochastics CCI 7.0.1.68 / MT Strategy Visuals, MTOrderPlot</text>
<text x="11" y="508">MT Signals Extremes Slow Stochastics CCI</text>
<text x="11" y="651">CCI(ES 09-15 (150 Tick),14)</text>
<text x="11" y="794">Cumulative Profit (Cash)</text>
<text x="11" y="937">Info Bar</text>
<text x="11" y="1033">© 2015 NinjaTrader, LLC</text>
</g>
<clipPath id="cpi"><rect x="900" y="940" width="486" height="95"/></clipPath>
<g fill="#000" clip-path="url(#cpi)">
<text x="920" y="956">Trades: 2 | Wins: 0 | Losses: 2 | Win%: 0,00 | P&amp;L: | Pts: -15 | %: 0,00 | Cash:-750,00</text>
<text x="920" y="968">Maximum Draw Down: | Pts-15 | % 0,00 | Cash: -750,00</text>
<text x="920" y="980.3">Trade Profit AVG: | Pts: -7,5 | %: 0,00 | Cash:-375,00</text>
<text x="920" y="992.2">Winners: 0 | Consec: 0 | Largest: 0 | Trade Profit AVG: | Pts: 0 | %: 0,00 | Cash:0,00</text>
<text x="920" y="1005.3">Losers: 2 | Consec: 2 | Largest: -10 | Trade Profit AVG: | Pts: -7,5 | %: 0,00 | Cash:-375,00</text>
<text x="920" y="1017.2">Trade AVG Per day: 2,00 | Win : 0,00 | Lose : 2,00 | Duration AVG bars: 52,00 | Time: 00:46:04</text>
<text x="920" y="1029">Sharpe: 1,00 | P Factor: 0,00 | AVG RR: 1:0,00 | PMD: -1,00 | Expectancy:-375</text>
<text x="920" y="1041">©2009 to 2011 MicroTrends™ MT Strategy Foundation Version 7.0.1.68</text>
</g>
<path d="M1386.5 224.3L1392.5 218.05H1435.0V230.55H1392.5Z" fill="#000" stroke="#000" stroke-width="1"/>
<text x="1394.0" y="228.3" fill="#fff">2087,00</text>
<path d="M1386.5 505.1L1392.5 498.6H1422.8V511.6H1392.5Z" fill="#008000" stroke="#000" stroke-width="1"/>
<text x="1394.0" y="509.1" fill="#fff">94,29</text>
<path d="M1386.5 497.9L1392.5 491.4H1412.7V504.4H1392.5Z" fill="#FFA500" stroke="#000" stroke-width="1"/>
<text x="1394.0" y="501.9" fill="#000">100</text>
<path d="M1386.5 662L1392.5 655.75H1428.5V668.25H1392.5Z" fill="#FFA500" stroke="#000" stroke-width="1"/>
<text x="1394.0" y="666" fill="#000">104,26</text>
<path d="M1386.5 902.3L1392.5 896.05H1417.5V908.55H1392.5Z" fill="#000" stroke="#000" stroke-width="1"/>
<text x="1394.0" y="906.3" fill="#fff">-750</text>
<defs><filter id="ws" x="-5%" y="-30%" width="110%" height="160%"><feDropShadow dx="3" dy="3" stdDeviation="2" flood-color="#000" flood-opacity="0.55"/></filter></defs>
<g font-family="'Liberation Serif','DejaVu Serif',serif" font-style="italic" font-size="23px" filter="url(#ws)">
<g transform="translate(887,216) rotate(-12) skewX(-10)">
<text textLength="386" lengthAdjust="spacingAndGlyphs" fill="#fff" stroke="#fff" stroke-width="4" stroke-linejoin="round">www.trading-software-collection.com</text>
<text textLength="386" lengthAdjust="spacingAndGlyphs" fill="#FF0000" stroke="#FF0000" stroke-width="0.7">www.trading-software-collection.com</text>
</g>
<g transform="translate(869,250) rotate(-11.8) skewX(-10)">
<text textLength="440" lengthAdjust="spacingAndGlyphs" fill="#fff" stroke="#fff" stroke-width="4" stroke-linejoin="round">andreybbrv@gmail.com, Skype: andreybbrv</text>
<text textLength="440" lengthAdjust="spacingAndGlyphs" fill="#FF0000" stroke="#FF0000" stroke-width="0.7">andreybbrv@gmail.com, Skype: andreybbrv</text>
</g>
</g>
</svg>

<div class="abs" style="left:8px;top:1062px;width:1438px;height:24px;background:#F0F0F0;border-top:1px solid #FCFCFC"></div>
<div class="abs" style="left:7px;top:31px;width:1px;height:1056px;background:#E3E3E3"></div>
<div class="abs" style="left:1405px;top:1063px;width:24px;height:22px;background:#CDCDCD"></div>
<svg class="abs" style="left:12px;top:1068px" width="10" height="11"><path d="M7 2.300L2.700 5.500L7 8.700" fill="none" stroke="#555" stroke-width="2"/></svg>
<svg class="abs" style="left:1433px;top:1068px" width="10" height="11"><path d="M3 2.300L7.300 5.500L3 8.700" fill="none" stroke="#555" stroke-width="2"/></svg>
<div class="abs" style="left:8px;top:1086px;width:1700px;height:1px;background:#DADADA"></div>

<div class="abs" style="left:1446px;top:31px;width:1262px;height:1055px;background:#F0F0F0;width:262px"></div>
<div class="abs" style="left:1446px;top:31px;height:24px;width:261px;background:linear-gradient(#FFFFFF,#FBFBFB 55%,#F1F1F1);border-right:1px solid #D8D8D8"></div>
<svg class="abs" style="left:1650px;top:31px" width="58" height="25" viewBox="1650 31 58 25"><g fill="#000"><path d="M1657.500 42h5l-2.500 2.500z"/><path d="M1671.500 42h5l-2.500 2.500z"/></g><g fill="#9A9A9A"><rect x="1702" y="35" width="2" height="2"/><rect x="1702" y="39" width="2" height="2"/><rect x="1702" y="43" width="2" height="2"/><rect x="1702" y="47" width="2" height="2"/></g></svg>
<div class="t" style="left:1686px;top:37px;font-size:11px">?</div>
<div class="t" id="lnk" style="left:1454px;top:69px;font-size:16px;color:#0000FF;text-decoration:underline;letter-spacing:0.05px">MicroTrends Help Desk</div>
<div class="btn" style="left:1647px;top:65px;width:25px;height:21px;line-height:18px;font-size:12px;"><span class="nc">&lt;</span></div>
<div class="btn" style="left:1675px;top:65px;width:25px;height:21px;line-height:18px;font-size:12px;"><span class="nc">ok</span></div>
<div class="abs" style="left:1450px;top:101px;width:253px;height:33px;border:1px solid #DCDCDC"></div>
<div class="t" style="left:1457px;top:97px;font-size:11px;background:#F0F0F0;padding:0 2px;letter-spacing:-0.35px">Strategy</div>
<div class="chk" style="left:1462px;top:113px"><svg width="11" height="11"><path d="M2 5.500L4.500 8L9 2.500" fill="none" stroke="#000" stroke-width="2"/></svg></div>
<div class="t" style="left:1479px;top:113px;font-size:12px"><span class="nx">Trade</span></div>
<div class="chk" style="left:1517px;top:113px"><svg width="11" height="11"><path d="M2 5.500L4.500 8L9 2.500" fill="none" stroke="#000" stroke-width="2"/></svg></div>
<div class="t" style="left:1534px;top:113px;font-size:12px"><span class="nx">Long</span></div>
<div class="chk" style="left:1574px;top:113px"><svg width="11" height="11"><path d="M2 5.500L4.500 8L9 2.500" fill="none" stroke="#000" stroke-width="2"/></svg></div>
<div class="t" style="left:1591px;top:113px;font-size:12px"><span class="nx">Short</span></div>
<div class="chk" style="left:1633px;top:113px;border-color:#BCBCBC;background:#E6E6E6"></div>
<div class="t" style="left:1650px;top:113px;font-size:12px;color:#838383"><span class="nx">Confirm</span></div>
<div class="abs" style="left:1446px;top:140px;width:261px;height:44px;background:#000"></div>
<div class="t" style="left:1497px;top:142px;font-size:16.5px;color:#fff">Flat</div>
<div class="t" style="left:1627px;top:144px;font-size:13px;color:#fff;letter-spacing:0.6px">------</div>
<div class="t" style="left:1544px;top:168px;font-size:13px;color:#008000;letter-spacing:0.2px">Trade PL:0</div>
<div class="abs" style="left:1446px;top:190px;width:261px;height:1px;background:#E3E3E3"></div>
<div class="abs" style="left:1451px;top:198px;width:57px;height:18px;background:#FFFF00"></div>
<div class="radio" style="left:1451px;top:200px"><div class="abs" style="left:2px;top:2px;width:7px;height:7px;border-radius:50%;background:#111"></div></div>
<div class="t" style="left:1468px;top:200px;font-size:12px"><span class="nx">Market</span></div>
<div class="radio" style="left:1520px;top:200px"></div>
<div class="t" style="left:1537px;top:200px;font-size:12px"><span class="nx">Limit</span></div>
<div class="radio" style="left:1577px;top:200px"></div>
<div class="t" style="left:1594px;top:200px;font-size:12px"><span class="nx">Stop</span></div>
<div class="radio" style="left:1631px;top:200px"></div>
<div class="t" style="left:1648px;top:200px;font-size:12px"><span class="nx">Stop Limit</span></div>
<div class="page" style="left:1446px;top:245px;width:259px;height:177px;border-left-color:#fff"></div>
<div class="tab sel" style="left:1446px;top:225px;width:48px;height:21px;line-height:18px;border-left-color:#E0E0E0"><span class="nt">Market</span></div>
<div class="tab" style="left:1495px;top:228px;width:58px;height:17px;line-height:16px"><span class="nt">Limit Entry</span></div>
<div class="tab" style="left:1554px;top:228px;width:60px;height:17px;line-height:16px"><span class="nt">Stop Entry</span></div>
<div class="tab" style="left:1615px;top:228px;width:78px;height:17px;line-height:16px"><span class="nt">Stop limit Entry</span></div>
<div class="cbtn" style="left:1474px;top:261px;width:93px;height:44px"><div style="background:#80FF80;font-size:12px"><span class="nc">Buy Market</span></div></div>
<div class="cbtn" style="left:1580px;top:260px;width:95px;height:44px"><div style="background:#FF8080;font-size:12px"><span class="nc">Sell Market</span></div></div>
<div class="cbtn" style="left:1474px;top:312px;width:93px;height:44px"><div style="background:#80FF80;font-size:12px"><span class="nc">Buy Ask</span></div></div>
<div class="cbtn" style="left:1580px;top:312px;width:95px;height:44px"><div style="background:#FF8080;font-size:12px"><span class="nc">Sell Ask</span></div></div>
<div class="cbtn" style="left:1475px;top:364px;width:93px;height:44px"><div style="background:#80FF80;font-size:12px"><span class="nc">Buy Bid</span></div></div>
<div class="cbtn" style="left:1580px;top:364px;width:95px;height:44px"><div style="background:#FF8080;font-size:12px"><span class="nc">Sell Bid</span></div></div>
<div class="page" style="left:1446px;top:443px;width:259px;height:194px;border-left-color:#fff"></div>
<div class="tab sel" style="left:1446px;top:423px;width:109px;height:21px;line-height:18px;border-left-color:#E0E0E0"><span class="nt">Trade Management</span></div>
<div class="tab" style="left:1555px;top:426px;width:57px;height:17px;line-height:16px"><span class="nt">Stop Loss</span></div>
<div class="tab" style="left:1613px;top:426px;width:60px;height:17px;line-height:16px;border-right:none;text-align:left;padding-left:2px;overflow:hidden"><span class="ntl">Stops ATM</span></div>
<div class="btn" style="left:1674px;top:425px;width:15px;height:16px;background:#F0F0F0"></div>
<div class="btn" style="left:1690px;top:425px;width:15px;height:16px;background:#F0F0F0"></div>
<svg class="abs" style="left:1674px;top:425px" width="31" height="16"><path d="M9 5v6l-3.500-3z" fill="#000"/><path d="M22 5v6l3.500-3z" fill="#000"/></svg>
<div class="cbtn" style="left:1478px;top:462px;width:59px;height:47px"><div style="background:#FFE4C4;font-size:12px"><span class="nc">BE</span></div></div>
<div class="cbtn" style="left:1547px;top:462px;width:59px;height:47px"><div style="background:#FFE4C4;font-size:12px"><span class="nc">Trail</span></div></div>
<div class="cbtn" style="left:1615px;top:462px;width:63px;height:47px"><div style="background:#FFE4C4;font-size:12px"><span class="nc">Nudge 50</span></div></div>
<div class="cbtn" style="left:1478px;top:515px;width:200px;height:47px"><div style="background:#FFC080;font-size:12px"><span class="nc">Move In</span></div></div>
<div class="cbtn" style="left:1478px;top:570px;width:200px;height:47px"><div style="background:#FF80FF;font-size:12px"><span class="nc">Cancel Orders &amp; Flatten Position</span></div></div>
<div class="btn" style="left:1647px;top:645px;width:25px;height:21px;line-height:18px;font-size:12px;"><span class="nc">&lt;</span></div>
<div class="btn" style="left:1675px;top:645px;width:25px;height:21px;line-height:18px;font-size:12px;"><span class="nc">ok</span></div>
<div class="t" style="left:1454px;top:1068px;font-size:11px">7.0.1.68</div>
<div class="t" style="right:12px;top:1068px;font-size:11px;letter-spacing:0.1px">© 2011 MicroTrends®</div>
<div id="dlg" class="abs" style="left:113px;top:421px;width:578px;height:509px;background:#EBEBEB;border:1px solid #D4D4D4;box-shadow:0 0 3px rgba(0,0,0,.25)">
<div class="abs" style="left:7px;top:26px;width:563px;height:475px;background:#F0F0F0;border:1px solid #E2E2E2;border-top:none"></div>
<div class="t" id="dtitle" style="left:256px;top:7px;font-size:15.5px;letter-spacing:-0.45px">Strategies</div>
<div class="abs" style="left:549px;top:5px;width:19px;height:19px;background:#BEBEBE"></div>
<svg class="abs" style="left:555px;top:11px" width="8" height="8"><path d="M1 1L6.500 6.500M6.500 1L1 6.500" stroke="#fff" stroke-width="1.600"/></svg>
</div>
<div class="abs" style="left:121px;top:452px;width:272px;height:408px;border-left:2px solid #6A6A6A;border-top:1px solid #A0A0A0;border-bottom:1px solid #fff;border-right:1px solid #fff"></div>
<div class="abs" style="left:122px;top:453px;width:270px;height:239px;background:#fff;border:1px solid #696969;border-right-color:#828282;border-bottom-color:#828282;overflow:hidden">
<div class="li" style="left:4px;top:3px">MT Extremes Bollinger</div>
<div class="li" style="left:4px;top:16px">MT Extremes CCI</div>
<div class="li" style="left:4px;top:29px">MT Extremes RSI</div>
<div class="li" style="left:4px;top:42px">MT Extremes Slow Stochastics CCI</div>
<div class="li" style="left:4px;top:55px">MT Extremes WilliamsR</div>
<div class="li" style="left:4px;top:68px">MT Generic Signals Trader</div>
<div class="li" style="left:4px;top:81px">MT Generic Signals Trader Pro</div>
<div class="li" style="left:4px;top:94px">MT MA Double Crossover</div>
<div class="li" style="left:4px;top:107px">MT MA Oscillator</div>
<div class="li" style="left:4px;top:120px">MT MA Single Crossover</div>
<div class="li" style="left:4px;top:133px">MT MA Stochastics Crossover HA</div>
<div class="li" style="left:4px;top:146px">MT MA Triple Crossover</div>
<div class="li" style="left:4px;top:159px">MT MACD Crossover</div>
<div class="li" style="left:4px;top:172px">MT MT2 Trend Trader</div>
<div class="li" style="left:4px;top:185px">MT MT3 HILO Trader</div>
<div class="li" style="left:4px;top:198px">MT Open Range</div>
<div class="li" style="left:4px;top:211px">MT Scalper</div>
<div class="li" style="left:4px;top:224px">MT Session Open Breakout</div>
<div class="abs" style="left:252px;top:1px;width:17px;height:235px;background:#F0F0F0"></div>
<div class="abs" style="left:252px;top:46px;width:15px;height:116px;background:#CDCDCD"></div>
<svg class="abs" style="left:255px;top:5px" width="11" height="9"><path d="M1.500 6.500L5.500 2.500L9.500 6.500" fill="none" stroke="#404040" stroke-width="1.600"/></svg>
<svg class="abs" style="left:255px;top:223px" width="11" height="9"><path d="M1.500 2.500L5.500 6.500L9.500 2.500" fill="none" stroke="#404040" stroke-width="1.600"/></svg>
</div>
<div class="abs" style="left:122px;top:695px;width:270px;height:122px;background:#fff;border:1px solid #696969;border-right-color:#828282;border-bottom-color:#828282;overflow:hidden">
<div class="abs" style="left:2px;top:2px;width:266px;height:13px;background:#3399FF"></div>
<div class="li" style="left:4px;top:3px;color:#fff">MT Extremes Slow Stochastics CCI 7.0.1.68</div>
</div>
<div class="btn" style="left:148px;top:830px;width:66px;height:22px;line-height:21px;font-size:12px;color:#9A9A9A;background:#EFEFEF;border-color:#D0D0D0"><span class="nc">New</span></div>
<div class="btn" style="left:299px;top:830px;width:67px;height:22px;line-height:21px;font-size:12px"><span class="nc">Remove</span></div>
<div class="btn" style="left:210px;top:886px;width:79px;height:23px;line-height:20px;font-size:12px"><span class="nc">OK</span></div>
<div class="btn" style="left:363px;top:886px;width:78px;height:23px;line-height:20px;font-size:12px;border-color:#3399FF"><span class="nc">Apply</span></div>
<div class="btn" style="left:516px;top:886px;width:78px;height:23px;line-height:20px;font-size:12px"><span class="nc">Close</span></div>
<svg class="abs" style="left:671px;top:910px" width="12" height="12"><g fill="#B8B8B8"><rect x="8" y="0" width="2" height="2"/><rect x="4" y="4" width="2" height="2"/><rect x="8" y="4" width="2" height="2"/><rect x="0" y="8" width="2" height="2"/><rect x="4" y="8" width="2" height="2"/><rect x="8" y="8" width="2" height="2"/></g></svg>
<div class="abs" style="left:401px;top:453px;width:278px;height:344px;background:#fff;border:1px solid #696969;border-top-width:2px;border-right-color:#A0A0A0;border-bottom-color:#A0A0A0;overflow:hidden">
<div class="abs" style="left:0;top:0;width:14px;height:342px;background:#C8C8C8"></div>
<div class="abs" style="left:14px;top:1px;width:245px;height:342px">
<div class="row" style="top:0px"><div class="n">ATR Time Series Period</div><div class="s"></div><div class="v">1440</div></div>
<div class="cat" style="top:16px"><i></i><span>System Session Times</span></div>
<div class="row" style="top:32px"><div class="n">&nbsp;Session Mode</div><div class="s"></div><div class="v">2</div></div>
<div class="row" style="top:48px"><div class="n">Session Break End</div><div class="s"></div><div class="v">14</div></div>
<div class="row" style="top:64px"><div class="n">Session Break Mode</div><div class="s"></div><div class="v">0</div></div>
<div class="row" style="top:80px"><div class="n">Session Break Start</div><div class="s"></div><div class="v">11</div></div>
<div class="row" style="top:96px"><div class="n">Session Days</div><div class="s"></div><div class="v">127</div></div>
<div class="row" style="top:112px"><div class="n">Session End Friday</div><div class="s"></div><div class="v">-1</div></div>
<div class="row" style="top:128px"><div class="n">Session End Hour</div><div class="s"></div><div class="v">15</div></div>
<div class="row" style="top:144px"><div class="n">Session End Minute</div><div class="s"></div><div class="v">30</div></div>
<div class="row" style="top:160px"><div class="n">Session Start Hour</div><div class="s"></div><div class="v">2</div></div>
<div class="row" style="top:176px"><div class="n">Session Start Minute</div><div class="s"></div><div class="v">0</div></div>
<div class="row" style="top:192px"><div class="n">Session Weekends</div><div class="s"></div><div class="v">1</div></div>
<div class="cat" style="top:208px"><i></i><span>Zone Tracking Identity</span></div>
<div class="row" style="top:224px"><div class="n">Zone Track ID</div><div class="s"></div><div class="v"></div></div>
<div class="cat" style="top:240px"><i></i><span>General</span></div>
<div class="row" style="top:256px"><div class="n">Account</div><div class="s"></div><div class="v">Sim101</div></div>
<div class="row" style="top:272px"><div class="n">Calculate on bar close</div><div class="s"></div><div class="v">True</div></div>
<div class="row" style="top:288px"><div class="abs" style="left:0;top:0;width:116px;height:15px;background:#C8C8C8"></div><div class="n" style="color:#000">Enabled</div><div class="s"></div><div class="v" style="color:#000">True</div></div>
<div class="row" style="top:304px"><div class="n">Input series</div><div class="s"></div><div class="v">ES 09-15 (150 Tick)</div></div>
<div class="row" style="top:320px"><div class="n">Label</div><div class="s"></div><div class="v">MT Extremes Slow Stochastics CCI</div></div>
<div class="row" style="top:336px"><div class="n">Maximum bars look back</div><div class="s"></div><div class="v">TwoHundredFiftySix</div></div>
</div>
<div class="abs" style="left:259px;top:0;width:17px;height:342px;background:#F0F0F0"></div>
<div class="abs" style="left:261px;top:243px;width:14px;height:21px;background:#CDCDCD"></div>
<svg class="abs" style="left:262px;top:5px" width="11" height="9"><path d="M1.500 6.500L5.500 2.500L9.500 6.500" fill="none" stroke="#404040" stroke-width="1.600"/></svg>
<svg class="abs" style="left:262px;top:329px" width="11" height="9"><path d="M1.500 2.500L5.500 6.500L9.500 2.500" fill="none" stroke="#404040" stroke-width="1.600"/></svg>
</div>
<div class="abs" style="left:401px;top:800px;width:278px;height:59px;background:#F0F0F0;border:1px solid #A0A0A0;border-top-color:#828282;border-left-color:#828282"></div>
<div class="t" style="left:406px;top:804px;font-weight:bold;font-size:11.5px;letter-spacing:-0.3px">Enabled</div>
<div class="t" style="left:406px;top:819px;letter-spacing:-0.1px">Enabled</div>
</body></html>
